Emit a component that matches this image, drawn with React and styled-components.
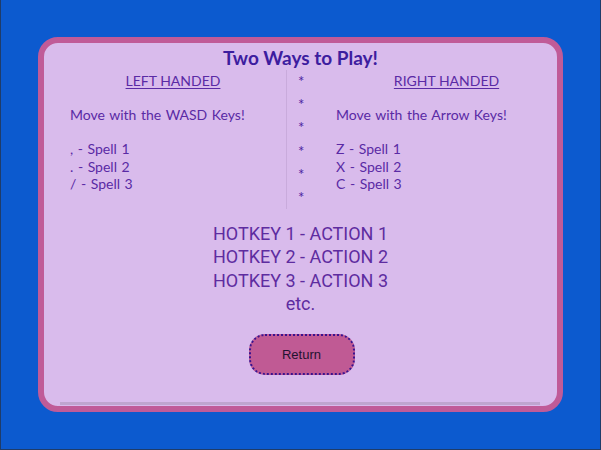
import React from "react";
import styled, { createGlobalStyle } from "styled-components";

const Global = createGlobalStyle`
  html, body { margin: 0; padding: 0; }
  body { background: #0c5acf; }
  * { box-sizing: border-box; }
`;

const Page = styled.div`
  width: 601px;
  height: 450px;
  background: #0c5acf;
  border: 1px solid #1f3c6a;
  border-top: none;
  padding-top: 37px;
  display: flex;
  justify-content: center;
`;

const Card = styled.div`
  width: 525px;
  height: 375px;
  background: #d9bbec;
  border: 6px solid #c05b98;
  border-radius: 20px;
  display: flex;
  flex-direction: column;
  align-items: stretch;
  font-family: Lato, "Noto Sans", sans-serif;
`;

const Title = styled.h2`
  margin: 3px 0 0;
  font-size: 19px;
  line-height: 24px;
  font-weight: 700;
  text-align: center;
  color: #3d1d9f;
`;

const Columns = styled.div`
  display: grid;
  grid-template-columns: 226px 40px 1fr;
  margin-left: 16px;
  margin-top: 0;
`;

const Side = styled.div`
  padding-left: ${(p) => p.$pad}px;
  padding-top: 2px;
  color: #5a2aa5;
  font-size: 14px;
  line-height: 17.5px;
`;

const Heading = styled.div`
  text-align: center;
  text-decoration: underline;
  text-underline-offset: 2px;
  margin-left: ${(p) => -p.$pad}px;
  margin-bottom: 16px;
`;

const Line = styled.div`
  margin-top: ${(p) => (p.$gap ? "17px" : "0")};
  white-space: pre;
  word-spacing: 1px;
`;

const Stars = styled.div`
  border-left: 1px solid #c9abdc;
  padding-left: 11px;
  color: #4a23a0;
  font-size: 15px;
  line-height: 23.2px;
`;

const Star = styled.div`
  height: 23.2px;
`;

const Hotkeys = styled.div`
  margin-top: 13px;
  text-align: center;
  font-family: Roboto, "Noto Sans", sans-serif;
  font-size: 18px;
  line-height: 23.3px;
  color: #5e2ca0;
`;

const ButtonRow = styled.div`
  display: flex;
  justify-content: center;
  margin-top: 19px;
`;

const ReturnButton = styled.button`
  width: 106px;
  height: 41px;
  background: #c05a94;
  border: 2px dotted #3a138f;
  border-radius: 16px;
  font-family: "Liberation Sans", Arial, sans-serif;
  font-size: 13px;
  color: #1f1230;
  margin-left: 2px;
  cursor: pointer;
`;

const Spacer = styled.div`
  flex: 1;
`;

const BottomRule = styled.div`
  height: 3px;
  margin: 0 17px 1px 16px;
  background: #bfa5cf;
`;

export default function App() {
  return (
    <>
      <Global />
      <Page>
        <Card>
          <Title>Two Ways to Play!</Title>
          <Columns>
            <Side $pad={10}>
              <Heading $pad={10}>LEFT HANDED</Heading>
              <Line>Move with the WASD Keys!</Line>
              <Line $gap>, - Spell 1</Line>
              <Line>. - Spell 2</Line>
              <Line>/ - Spell 3</Line>
            </Side>
            <Stars>
              {[0, 1, 2, 3, 4, 5].map((i) => (
                <Star key={i}>*</Star>
              ))}
            </Stars>
            <Side $pad={10}>
              <Heading $pad={0}>RIGHT HANDED</Heading>
              <Line>Move with the Arrow Keys!</Line>
              <Line $gap>Z - Spell 1</Line>
              <Line>X - Spell 2</Line>
              <Line>C - Spell 3</Line>
            </Side>
          </Columns>
          <Hotkeys>
            <div>HOTKEY 1 - ACTION 1</div>
            <div>HOTKEY 2 - ACTION 2</div>
            <div>HOTKEY 3 - ACTION 3</div>
            <div>etc.</div>
          </Hotkeys>
          <ButtonRow>
            <ReturnButton>Return</ReturnButton>
          </ButtonRow>
          <Spacer />
          <BottomRule />
        </Card>
      </Page>
    </>
  );
}
